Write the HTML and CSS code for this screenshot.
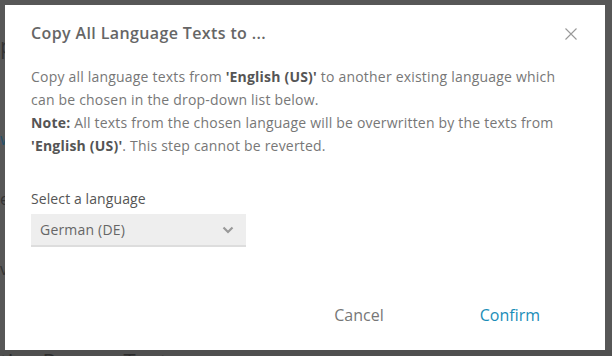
FILE: index.html
```html
<!DOCTYPE html>
<html lang="en">
<head>
  <meta charset="UTF-8" />
  <title>Copy All Language Texts</title>
  <link rel="stylesheet" href="styles.css">
</head>
<body>
  <div class="page">
    <div class="page-title">p</div>
    <div class="page-link">w</div>
    <div class="page-row">e</div>
    <div class="page-row second">v</div>
    <div class="page-footer"><span>tive Reason Text</span></div>
  </div>

  <div class="modal">
    <div class="modal-header">
      <h2 class="modal-title">Copy All Language Texts to ...</h2>
      <span class="close">
        <svg width="12" height="12" viewBox="0 0 12 12"><path d="M0.5 0.5 L11.5 11.5 M11.5 0.5 L0.5 11.5" stroke="#999" stroke-width="1.1" fill="none"/></svg>
      </span>
    </div>
    <div class="modal-body">
      <p>Copy all language texts from <b>'English (US)'</b> to another existing language which can be chosen in the drop-down list below.<br>
      <b>Note:</b> All texts from the chosen language will be overwritten by the texts from <b>'English (US)'</b>. This step cannot be reverted.</p>

      <label class="field-label">Select a language</label>
      <div class="select">
        <span>German (DE)</span>
        <svg width="12" height="8" viewBox="0 0 12 8"><path d="M1.5 1.5 L6 6 L10.5 1.5" stroke="#999" stroke-width="2.2" fill="none"/></svg>
      </div>
    </div>
    <div class="modal-footer">
      <button class="btn cancel">Cancel</button>
      <button class="btn confirm">Confirm</button>
    </div>
  </div>
</body>
</html>
```
FILE: styles.css
```css
body {
  margin: 0;
  width: 612px;
  height: 356px;
  overflow: hidden;
  background: #575757;
  font-family: 'Open Sans', sans-serif;
}

.page {
  position: relative;
  height: 356px;
  overflow: hidden;
  color: #333;
}

.page-title {
  position: absolute;
  left: 0;
  top: 30px;
  font-size: 22px;
}

.page-link {
  position: absolute;
  left: 0;
  top: 128px;
  font-size: 16px;
  color: #24506a;
}

.page-row {
  position: absolute;
  left: 0;
  top: 188px;
  font-size: 16px;
}

.page-row.second {
  top: 258px;
}

.page-footer {
  position: absolute;
  left: 0;
  top: 350px;
  width: 612px;
  height: 6px;
  overflow: hidden;
  background: #4f4f4f;
}

.page-footer span {
  display: block;
  font-size: 22px;
  line-height: 22px;
  color: #2c2c2c;
}

.modal {
  position: absolute;
  left: 5px;
  top: 5px;
  width: 600px;
  height: 345px;
  background: #fff;
  box-sizing: border-box;
  display: flex;
  flex-direction: column;
}

.modal-header {
  display: flex;
  align-items: center;
  justify-content: space-between;
  padding: 16px 28px 0 26px;
  height: 24px;
}

.modal-title {
  margin: 0;
  font-size: 16px;
  font-weight: 600;
  letter-spacing: 0.38px;
  color: #666;
}

.close {
  display: flex;
  margin-top: 1px;
}

.modal-body {
  padding: 20px 26px 0 26px;
  color: #777;
  font-size: 14px;
  font-weight: 400;
  letter-spacing: 0.2px;
}

.modal-body p {
  margin: 0;
  line-height: 23px;
}

.modal-body b {
  font-weight: 700;
  color: #555;
}

.field-label {
  display: block;
  margin-top: 32px;
  line-height: 20px;
  color: #555;
  letter-spacing: 0.1px;
}

.select {
  margin-top: 5px;
  width: 215px;
  height: 33px;
  box-sizing: border-box;
  background: #eee;
  border-bottom: 2px solid #ddd;
  display: flex;
  align-items: center;
  justify-content: space-between;
  padding: 0 12px 0 9px;
  color: #666;
}

.modal-footer {
  margin-top: auto;
  display: flex;
  justify-content: flex-end;
  gap: 96px;
  padding: 0 65px 24px 0;
}

.btn {
  background: none;
  border: none;
  padding: 0;
  font-family: 'Open Sans', sans-serif;
  font-size: 16px;
  cursor: pointer;
}

.cancel {
  color: #777;
}

.confirm {
  color: #1a8db8;
}
```
